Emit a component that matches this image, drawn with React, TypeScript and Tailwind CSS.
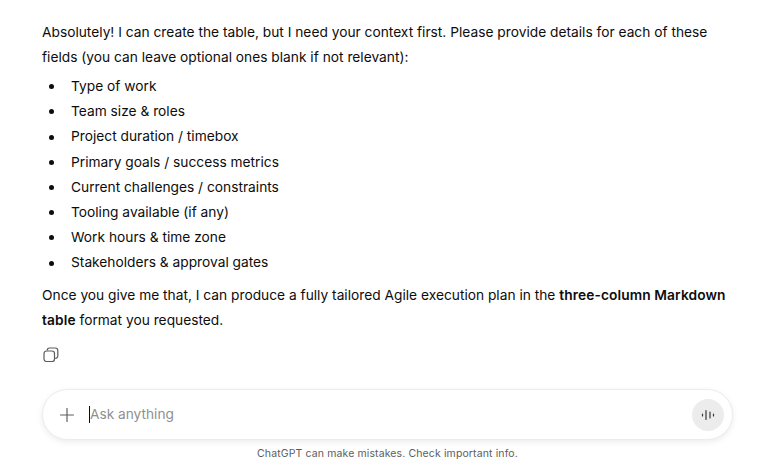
import React from 'react';
import { Plus } from 'lucide-react';

const fields = [
  'Type of work',
  'Team size & roles',
  'Project duration / timebox',
  'Primary goals / success metrics',
  'Current challenges / constraints',
  'Tooling available (if any)',
  'Work hours & time zone',
  'Stakeholders & approval gates',
];

const App: React.FC = () => {
  return (
    <div className="w-[775px] h-[468px] overflow-hidden bg-white font-['Inter',sans-serif] text-[#0d0d0d] flex flex-col">
      {/* Message */}
      <div className="px-[42px] pt-[20px] text-[13.75px] leading-[25.2px]">
        <p>
          Absolutely! I can create the table, but I need your context first. Please provide details for each of these
          fields (you can leave optional ones blank if not relevant):
        </p>
        <ul className="mt-[3.6px]">
          {fields.map((field) => (
            <li key={field} className="flex items-center">
              <span className="ml-[7px] mr-[17px] w-[5px] h-[5px] rounded-full bg-[#0d0d0d]" />
              {field}
            </li>
          ))}
        </ul>
        <p className="mt-[7px]">
          Once you give me that, I can produce a fully tailored Agile execution plan in the{' '}
          <strong className="font-semibold tracking-[0.1px]">three-column Markdown table</strong> format you requested.
        </p>
        <div className="mt-[14px] h-[16px]">
          <svg width="16" height="16" viewBox="0 0 16 16" fill="none" stroke="#5d5d5d" strokeWidth="1.2" className="ml-[1px]">
            <rect x="1" y="4" width="10.5" height="10.5" rx="2.6" />
            <path d="M4.2 3.6V3.4A2.4 2.4 0 0 1 6.6 1h5.6a2.6 2.6 0 0 1 2.6 2.6v5.4a2.4 2.4 0 0 1-2.6 2.3" />
          </svg>
        </div>
      </div>

      {/* Composer */}
      <div className="px-[42px] mt-[26px]">
        <div className="h-[51px] rounded-full bg-white border border-[#ececec] shadow-[0_2px_6px_rgba(0,0,0,0.08)] flex items-center pl-[13px] pr-[8px]">
          <Plus size={22} strokeWidth={1.3} color="#5d5d5d" />
          <div className="ml-[11px] w-px h-[17px] bg-[#0d0d0d]" />
          <span className="flex-1 text-[13.7px] text-[#8f8f8f]">Ask anything</span>
          <div className="w-[32px] h-[32px] rounded-full bg-[#ececec] flex items-center justify-center">
            <svg width="14" height="14" viewBox="0 0 14 14" stroke="#3a3a3a" strokeWidth="1.2" strokeLinecap="round">
              <path d="M1.5 6v2M5 2.5v9M9 4v6M12.5 6v2" />
            </svg>
          </div>
        </div>
      </div>

      {/* Disclaimer */}
      <p className="mt-[7px] text-center text-[10.5px] leading-[14px] text-[#5d5d5d] tracking-[0.12px]">
        ChatGPT can make mistakes. Check important info.
      </p>
    </div>
  );
};

export default App;
